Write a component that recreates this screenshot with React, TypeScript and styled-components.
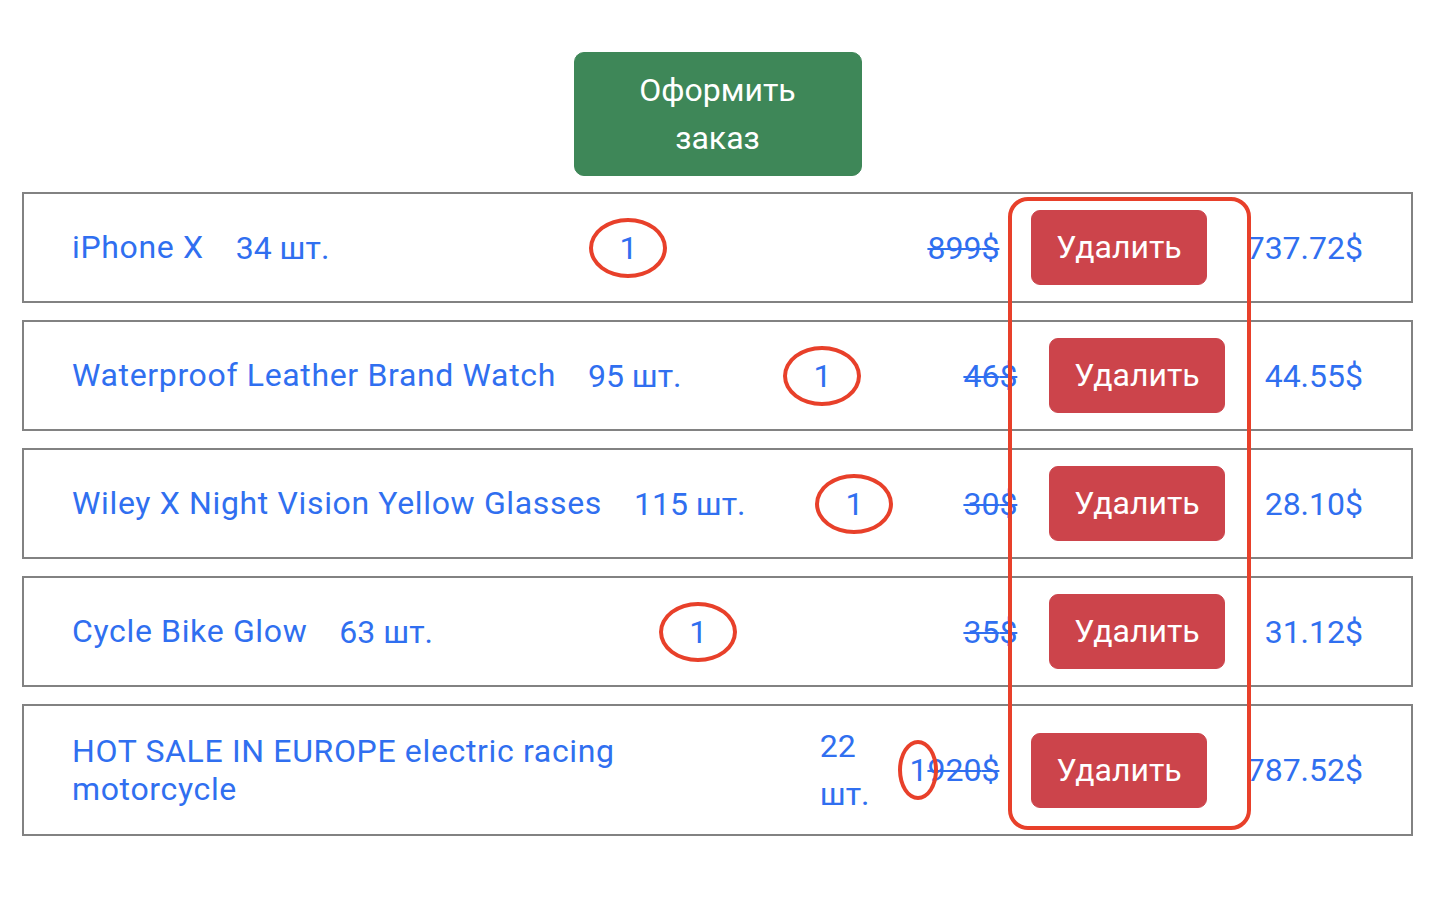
import React from "react";
import styled, { createGlobalStyle } from "styled-components";

const GlobalStyle = createGlobalStyle`
  body {
    margin: 0;
    background: #fff;
    font-family: Roboto, "Noto Sans", sans-serif;
  }
`;

const items = [
  { id: 1, title: "iPhone X", stock: 34, count: 1, price: 899, total: "737.72" },
  { id: 2, title: "Waterproof Leather Brand Watch", stock: 95, count: 1, price: 46, total: "44.55" },
  { id: 3, title: "Wiley X Night Vision Yellow Glasses", stock: 115, count: 1, price: 30, total: "28.10" },
  { id: 4, title: "Cycle Bike Glow", stock: 63, count: 1, price: 35, total: "31.12" },
  { id: 5, title: "HOT SALE IN EUROPE electric racing motorcycle", stock: 22, count: 1, price: 920, total: "787.52", squeezed: true },
];

const App = () => {
  return (
    <>
      <GlobalStyle />
      <Page>
        <OrderButton>Оформить заказ</OrderButton>
        <CartList>
          {items.map((item) => (
            <CartRow key={item.id}>
              <ProductInfo $fill={item.squeezed}>
                <ProductName $fill={item.squeezed}>{item.title}</ProductName>
                <Stock $wrap={item.squeezed}>{item.stock} шт.</Stock>
              </ProductInfo>
              <Count $narrow={item.squeezed}>{item.count}</Count>
              <PriceBlock>
                <OldPrice>{item.price}$</OldPrice>
                <DeleteButton>Удалить</DeleteButton>
                <NewPrice>{item.total}$</NewPrice>
              </PriceBlock>
            </CartRow>
          ))}
          <Highlight />
        </CartList>
      </Page>
    </>
  );
};

export default App;

const Page = styled.div`
  display: flex;
  flex-direction: column;
  align-items: center;
  width: 1391px;
  padding: 52px 0 40px 22px;
  color: #306ff0;
  font-size: 32px;
`;

const OrderButton = styled.button`
  width: 288px;
  padding: 13px 24px;
  border: 1px solid #3e8758;
  border-radius: 10px;
  background: #3e8758;
  color: #fff;
  font-family: inherit;
  font-size: 32px;
  line-height: 48px;
  margin-bottom: 16px;
`;

const CartList = styled.div`
  position: relative;
  width: 100%;
`;

const CartRow = styled.div`
  display: flex;
  align-items: center;
  justify-content: space-between;
  padding: 16px 32px;
  border: 2px solid #828282;
  margin-bottom: 17px;
`;

const ProductInfo = styled.div<{ $fill?: boolean }>`
  display: flex;
  align-items: center;
  min-width: 0;
  ${(p) => p.$fill && "flex: 1 1 auto;"}
`;

const ProductName = styled.div<{ $fill?: boolean }>`
  margin: 0 16px;
  line-height: 1.2;
  letter-spacing: 0.65px;
  min-width: 0;
  ${(p) => p.$fill && "flex: 1 1 0;"}
`;

const Stock = styled.div<{ $wrap?: boolean }>`
  margin: 0 16px;
  line-height: 48px;
  flex-shrink: 0;
  white-space: nowrap;
  ${(p) => p.$wrap && "white-space: normal; width: min-content; margin-right: 40px;"}
`;

const Count = styled.div<{ $narrow?: boolean }>`
  position: relative;
  line-height: 48px;
  flex-shrink: 0;
  margin-right: ${(p) => (p.$narrow ? "0" : "16px")};

  &::after {
    content: "";
    position: absolute;
    left: 50%;
    top: 50%;
    width: ${(p) => (p.$narrow ? "32px" : "70px")};
    height: 52px;
    transform: translate(-50%, -50%);
    border: 4px solid #e8402a;
    border-radius: 50%;
  }
`;

const PriceBlock = styled.div`
  display: flex;
  align-items: center;
  flex-shrink: 0;
`;

const OldPrice = styled.span`
  line-height: 48px;
  text-decoration: line-through;
  text-decoration-thickness: 2px;
  margin-right: 16px;
`;

const DeleteButton = styled.button`
  margin: 0 24px 0 16px;
  padding: 12px 24px;
  border: 1px solid #cc444b;
  border-radius: 9px;
  background: #cc444b;
  color: #fff;
  font-family: inherit;
  font-size: 32px;
  line-height: 49px;
`;

const NewPrice = styled.span`
  line-height: 48px;
  margin: 0 16px;
`;

const Highlight = styled.div`
  position: absolute;
  left: 986px;
  top: 5px;
  width: 235px;
  height: 625px;
  border: 4px solid #e8402a;
  border-radius: 20px;
  pointer-events: none;
`;
